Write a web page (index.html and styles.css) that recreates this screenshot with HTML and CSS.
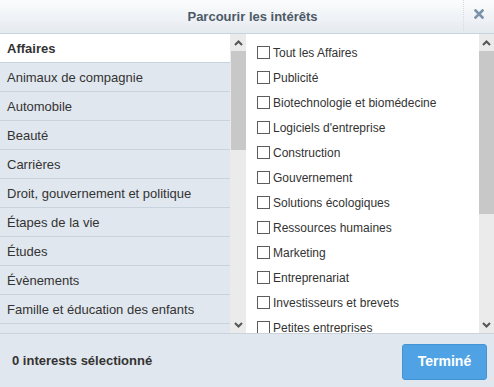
FILE: index.html
```html
<!DOCTYPE html>
<html lang="fr">
<head>
<meta charset="utf-8">
<title>Parcourir les intérêts</title>
<link rel="stylesheet" href="styles.css">
</head>
<body>
<div class="modal">
  <div class="header">
    <div class="title">Parcourir les intérêts</div>
    <div class="close">
      <svg width="10" height="10" viewBox="0 0 10 10"><path d="M1.5 1.5 L8.5 8.5 M8.5 1.5 L1.5 8.5" stroke="#7b92ab" stroke-width="2.6" stroke-linecap="square"/></svg>
    </div>
  </div>
  <div class="body">
    <div class="cats">
      <div class="cat active">Affaires</div>
      <div class="cat">Animaux de compagnie</div>
      <div class="cat">Automobile</div>
      <div class="cat">Beauté</div>
      <div class="cat">Carrières</div>
      <div class="cat">Droit, gouvernement et politique</div>
      <div class="cat">Étapes de la vie</div>
      <div class="cat">Études</div>
      <div class="cat">Évènements</div>
      <div class="cat">Famille et éducation des enfants</div>
      <div class="cat">Films et télévision</div>
    </div>
    <div class="sb sb-left">
      <div class="arrow"><svg width="9" height="6" viewBox="0 0 9 6"><path d="M1 5 L4.5 1.5 L8 5" fill="none" stroke="#555" stroke-width="2"/></svg></div>
      <div class="thumb thumb-left"></div>
      <div class="track"></div>
      <div class="arrow"><svg width="9" height="6" viewBox="0 0 9 6"><path d="M1 1 L4.5 4.5 L8 1" fill="none" stroke="#555" stroke-width="2"/></svg></div>
    </div>
    <div class="opts">
      <label class="opt"><span class="box"></span>Tout les Affaires</label>
      <label class="opt"><span class="box"></span>Publicité</label>
      <label class="opt"><span class="box"></span>Biotechnologie et biomédecine</label>
      <label class="opt"><span class="box"></span>Logiciels d'entreprise</label>
      <label class="opt"><span class="box"></span>Construction</label>
      <label class="opt"><span class="box"></span>Gouvernement</label>
      <label class="opt"><span class="box"></span>Solutions écologiques</label>
      <label class="opt"><span class="box"></span>Ressources humaines</label>
      <label class="opt"><span class="box"></span>Marketing</label>
      <label class="opt"><span class="box"></span>Entreprenariat</label>
      <label class="opt"><span class="box"></span>Investisseurs et brevets</label>
      <label class="opt"><span class="box"></span>Petites entreprises</label>
    </div>
    <div class="sb sb-right">
      <div class="arrow"><svg width="9" height="6" viewBox="0 0 9 6"><path d="M1 5 L4.5 1.5 L8 5" fill="none" stroke="#555" stroke-width="2"/></svg></div>
      <div class="thumb thumb-right"></div>
      <div class="track"></div>
      <div class="arrow"><svg width="9" height="6" viewBox="0 0 9 6"><path d="M1 1 L4.5 4.5 L8 1" fill="none" stroke="#555" stroke-width="2"/></svg></div>
    </div>
  </div>
  <div class="footer">
    <div class="count">0 interests sélectionné</div>
    <button class="done">Terminé</button>
  </div>
</div>
</body>
</html>
```

FILE: styles.css
```css
* { box-sizing: border-box; }
html, body { margin: 0; padding: 0; }
body {
  font-family: "Liberation Sans", Arial, sans-serif;
  color: #333;
  background: #fff;
}
.modal {
  width: 494px;
  height: 387px;
  display: flex;
  flex-direction: column;
  overflow: hidden;
}
.header {
  height: 34px;
  flex: none;
  display: flex;
  background: linear-gradient(#fbfcfd, #e5eaef);
  border-bottom: 1px solid #c9d3dc;
}
.title {
  flex: 1;
  display: flex;
  align-items: center;
  justify-content: center;
  padding-left: 42px;
  font-size: 13px;
  font-weight: bold;
  color: #4d5966;
}
.close {
  width: 31px;
  flex: none;
  display: flex;
  align-items: center;
  justify-content: center;
  border-left: 1px dotted #d6dbe0;
  margin: 0 0 2px 0;
  padding-bottom: 3px;
}
.body {
  height: 299px;
  flex: none;
  display: flex;
  background: #fff;
}
.cats {
  width: 230px;
  flex: none;
  overflow: hidden;
  background: #e1e7ee;
}
.cat {
  height: 29px;
  line-height: 29px;
  padding-left: 7px;
  font-size: 13px;
  color: #333;
  border-bottom: 1px solid #c9d3dd;
  white-space: nowrap;
}
.cat.active {
  background: #fff;
  font-weight: bold;
}
.sb {
  flex: none;
  display: flex;
  flex-direction: column;
  background-color: #f1f1f1;
  background-image: radial-gradient(#e4e4e4 0.6px, transparent 0.8px);
  background-size: 2px 2px;
}
.sb-left { width: 16px; padding-left: 1px; }
.sb-right { width: 15px; }
.arrow {
  height: 17px;
  flex: none;
  display: flex;
  align-items: center;
  justify-content: center;
}
.thumb { flex: none; background: #c8c8c8; }
.thumb-left { height: 99px; }
.thumb-right { height: 163px; }
.track { flex: 1; }
.opts {
  flex: 1;
  overflow: hidden;
  padding-top: 6px;
  padding-left: 11px;
}
.opt {
  height: 25px;
  display: flex;
  align-items: center;
  font-size: 12px;
  color: #333;
  white-space: nowrap;
}
.box {
  width: 13px;
  height: 13px;
  border: 1px solid #5c5c5c;
  background: #fff;
  margin-right: 3px;
  flex: none;
}
.footer {
  flex: 1;
  display: flex;
  align-items: center;
  justify-content: space-between;
  background: #e1e7ee;
  border-top: 1px solid #cbd4dd;
  padding: 0 7px 0 12px;
}
.count {
  font-size: 13px;
  font-weight: bold;
  color: #333;
}
.done {
  width: 85px;
  height: 36px;
  background: #4fa3e4;
  border: 1px solid #4494d4;
  border-radius: 3px;
  color: #fff;
  font-family: "Liberation Sans", Arial, sans-serif;
  font-size: 14px;
  font-weight: bold;
  margin-top: 2px;
  padding-bottom: 2px;
}
```
